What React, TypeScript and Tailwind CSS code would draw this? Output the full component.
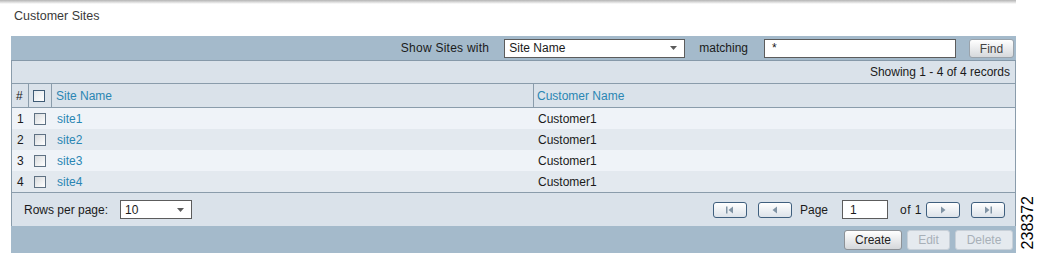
const sites = [
  { id: 1, name: "site1", customer: "Customer1" },
  { id: 2, name: "site2", customer: "Customer1" },
  { id: 3, name: "site3", customer: "Customer1" },
  { id: 4, name: "site4", customer: "Customer1" },
];

function Checkbox({ header }: { header?: boolean }) {
  return (
    <div
      className={`w-[12px] h-[12px] border ${
        header ? "border-[#3f5b75] bg-gradient-to-br from-[#e4e8ec] to-white" : "border-[#5f7183] bg-gradient-to-br from-[#d8dbde] to-white"
      }`}
    />
  );
}

function Arrow() {
  return (
    <svg width="7" height="4" viewBox="0 0 7 4" className="shrink-0">
      <path d="M0 0H7L3.5 4Z" fill="#5b5b5b" />
    </svg>
  );
}

function PageButton({ kind }: { kind: "first" | "prev" | "next" | "last" }) {
  return (
    <button className="w-[34px] h-[16px] rounded-[3px] border border-[#3f5f7e] bg-gradient-to-b from-white to-[#dde3ea] flex items-center justify-center">
      <svg width="10" height="8" viewBox="0 0 10 8">
        {kind === "first" && (
          <>
            <rect x="1" y="0.5" width="1.5" height="7" fill="#8093a4" />
            <path d="M8 0.5V7.5L3.5 4Z" fill="#8093a4" />
          </>
        )}
        {kind === "prev" && <path d="M7 0.5V7.5L2.5 4Z" fill="#8093a4" />}
        {kind === "next" && <path d="M3 0.5V7.5L7.5 4Z" fill="#8093a4" />}
        {kind === "last" && (
          <>
            <path d="M2 0.5V7.5L6.5 4Z" fill="#8093a4" />
            <rect x="7.5" y="0.5" width="1.5" height="7" fill="#8093a4" />
          </>
        )}
      </svg>
    </button>
  );
}

export default function App() {
  return (
    <div className="relative w-[1037px] h-[255px] bg-white font-['Liberation_Sans',Arial,sans-serif] text-[12px] text-[#1a1a1a]">
      {/* top shadow */}
      <div className="w-[1016px] h-[4px] bg-gradient-to-b from-[#b4b4b4] to-white" />
      <div className="pl-[14px] pt-[5px] h-[32px] text-[12.5px] leading-[15px] text-[#3a3a3a]">Customer Sites</div>

      <div className="ml-[11px] w-[1005px]">
        {/* search bar */}
        <div className="h-[25px] bg-[#a4bacb] border-b border-[#8699a9] flex items-center justify-end pr-[2px]">
          <span className="text-[#1a1a1a] tracking-[0.25px]">Show Sites with</span>
          <div className="ml-[15px] w-[181px] h-[19px] bg-white border border-[#5c5c5c] flex items-center justify-between pl-[4px] pr-[7px]">
            <span>Site Name</span>
            <Arrow />
          </div>
          <span className="ml-[14px]">matching</span>
          <div className="ml-[16px] w-[192px] h-[19px] bg-white border border-[#5c5c5c] flex items-center pl-[7px]">*</div>
          <button className="ml-[13px] w-[45px] h-[19px] rounded-[3px] border border-[#9aa3ab] bg-gradient-to-b from-white to-[#d6d9dc] text-[#444]">
            Find
          </button>
        </div>

        {/* records info */}
        <div className="h-[23px] bg-[#dae2ea] border-x border-b border-[#8a9cab] flex items-center justify-end pr-[5px]">
          Showing 1 - 4 of 4 records
        </div>

        {/* table header */}
        <div className="h-[24px] bg-[#dae2ea] border-x border-b border-[#8a9cab] flex">
          <div className="w-[17px] border-r border-[#8a9cab] flex items-center pl-[4px]">#</div>
          <div className="w-[23px] border-r border-[#8a9cab] flex items-center pl-[4px]">
            <Checkbox header />
          </div>
          <div className="w-[482px] border-r border-[#8a9cab] flex items-center pl-[4px] text-[#2a86b3]">Site Name</div>
          <div className="flex-1 flex items-center pl-[3px] text-[#2a86b3]">Customer Name</div>
        </div>

        {/* rows */}
        {sites.map((s, i) => (
          <div
            key={s.id}
            className={`h-[21px] flex border-x border-[#8a9cab] ${i % 2 === 0 ? "bg-[#eff3f8]" : "bg-[#e3e9ef]"}`}
          >
            <div className="w-[18px] flex items-center pl-[5px]">{s.id}</div>
            <div className="w-[23px] flex items-center pl-[4px]">
              <Checkbox />
            </div>
            <div className="w-[482px] flex items-center pl-[4px] text-[#2a86b3]">{s.name}</div>
            <div className="flex-1 flex items-center pl-[3px]">{s.customer}</div>
          </div>
        ))}

        {/* footer */}
        <div className="h-[34px] bg-[#dae2ea] border-x border-t border-[#8a9cab] flex items-center pl-[12px] pr-[10px]">
          <span>Rows per page:</span>
          <div className="ml-[12px] w-[72px] h-[19px] bg-white border border-[#5c5c5c] flex items-center justify-between pl-[4px] pr-[7px]">
            <span>10</span>
            <Arrow />
          </div>
          <div className="flex-1" />
          <PageButton kind="first" />
          <div className="ml-[11px]">
            <PageButton kind="prev" />
          </div>
          <span className="ml-[8px]">Page</span>
          <div className="ml-[14px] w-[46px] h-[19px] bg-white border border-[#5c5c5c] flex items-center pl-[7px]">1</div>
          <span className="ml-[12px] w-[23px] tracking-[0.5px]">of 1</span>
          <div className="ml-[3px]">
            <PageButton kind="next" />
          </div>
          <div className="ml-[11px]">
            <PageButton kind="last" />
          </div>
        </div>

        {/* actions */}
        <div className="h-[27px] bg-[#a4bacb] flex items-center justify-end pr-[3px] gap-[5px]">
          <button className="w-[58px] h-[20px] rounded-[3px] border border-[#8c9196] bg-gradient-to-b from-white to-[#d5d8db] text-[#222]">
            Create
          </button>
          <button className="w-[43px] h-[20px] rounded-[3px] border border-[#c8d0d8] bg-[#e5eaef] text-[#a8b0b8]">
            Edit
          </button>
          <button className="w-[58px] h-[20px] rounded-[3px] border border-[#c8d0d8] bg-[#e5eaef] text-[#a8b0b8]">
            Delete
          </button>
        </div>
      </div>

      <div className="absolute right-[2px] bottom-[6px] [writing-mode:vertical-rl] rotate-180 text-[16px] leading-[14px] text-black">
        238372
      </div>
    </div>
  );
}
